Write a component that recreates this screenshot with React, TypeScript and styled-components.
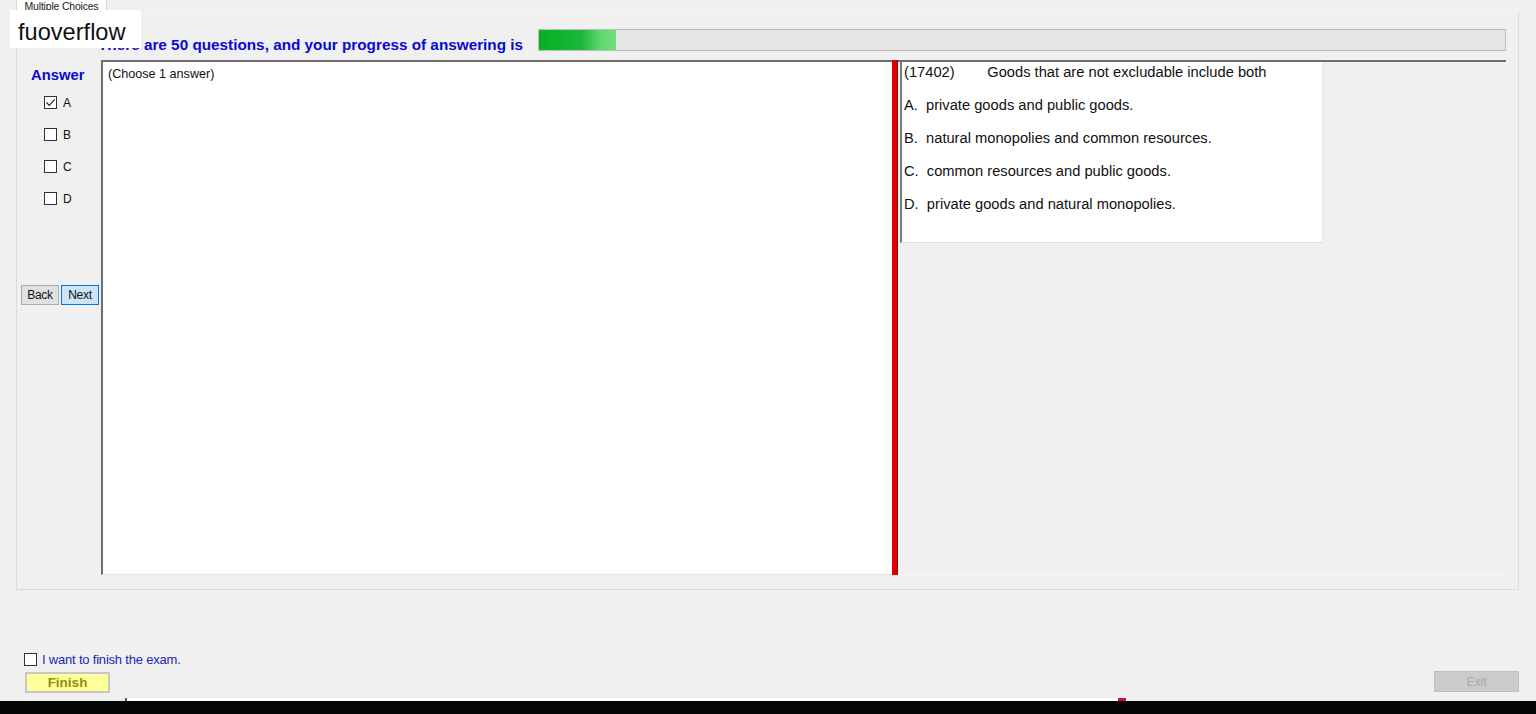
import React from 'react'
import styled, { createGlobalStyle } from 'styled-components'

const GlobalStyle = createGlobalStyle`
  html, body {
    margin: 0;
    padding: 0;
    background: #f0f0f0;
    overflow: hidden;
  }
  body {
    font-family: "Liberation Sans", Arial, sans-serif;
    color: #000;
  }
`

const Window = styled.div`
  position: relative;
  width: 1536px;
  height: 714px;
  display: flex;
  flex-direction: column;
  background: #f0f0f0;
`

const TabStrip = styled.div`
  height: 12px;
  padding-left: 16px;
  display: flex;
`

const TabHeader = styled.div`
  width: 89px;
  height: 12px;
  background: #fdfdfd;
  border-left: 1px solid #d9d9d9;
  border-right: 1px solid #d9d9d9;
  font-size: 10.5px;
  line-height: 12px;
  color: #222;
  text-align: center;
  letter-spacing: -0.2px;
`

const TabPage = styled.div`
  margin-left: 16px;
  width: 1501px;
  height: 576px;
  border: 1px solid #dadada;
  border-top-color: #f6f6f6;
  display: flex;
  flex-direction: column;
`

const HeaderRow = styled.div`
  height: 47px;
  display: flex;
  align-items: flex-start;
`

const Heading = styled.div`
  margin: 23px 0 0 81px;
  width: 440px;
  font-size: 15.3px;
  font-weight: bold;
  color: #0a0ad0;
  white-space: nowrap;
`

const ProgressTrack = styled.div`
  margin-top: 16px;
  width: 966px;
  height: 20px;
  border: 1px solid #bcbcbc;
  background: #e6e6e6;
  display: flex;
`

const ProgressFill = styled.div`
  height: 100%;
  background: linear-gradient(90deg, #06b026 0%, #1bb83a 55%, #5fd870 80%, #71dc7e 100%);
`

const Body = styled.div`
  display: flex;
  height: 515px;
`

const AnswerColumn = styled.div`
  width: 84px;
  display: flex;
  flex-direction: column;
  align-items: flex-start;
`

const AnswerTitle = styled.div`
  margin: 7px 0 0 14px;
  font-size: 14.8px;
  font-weight: bold;
  color: #0a0ad0;
`

const ChoiceList = styled.div`
  margin: 13px 0 0 27px;
  display: flex;
  flex-direction: column;
  gap: 19px;
`

const ChoiceRow = styled.label`
  display: flex;
  align-items: center;
  gap: 6px;
  font-size: 12px;
  color: #111;
  height: 13px;
`

const Box = styled.span<{ $checked?: boolean }>`
  width: 11px;
  height: 11px;
  border: 1px solid #333;
  background: #fff;
  display: flex;
  align-items: center;
  justify-content: center;
`

const NavRow = styled.div`
  margin: 80px 0 0 4px;
  display: flex;
  gap: 2px;
`

const NavButton = styled.button<{ $focused?: boolean }>`
  width: 38px;
  height: 20px;
  padding: 0;
  font-family: "Liberation Sans", Arial, sans-serif;
  font-size: 12px;
  letter-spacing: -0.3px;
  color: #111;
  background: ${p => (p.$focused ? '#cce4f7' : '#e1e1e1')};
  border: 1px solid ${p => (p.$focused ? '#0078d7' : '#adadad')};
`

const AnswerBox = styled.div`
  width: 791px;
  background: #fff;
  border-top: 2px solid #6e6e6e;
  border-left: 2px solid #6e6e6e;
  border-bottom: 1px solid #e3e3e3;
  padding: 5px 0 0 5px;
  font-size: 12.6px;
  color: #111;
  box-sizing: border-box;
`

const Splitter = styled.div`
  width: 6px;
  background: #e00000;
  border-right: 1px solid #7a1010;
  box-sizing: border-box;
`

const QuestionPane = styled.div`
  width: 608px;
  border-top: 2px solid #6e6e6e;
  border-bottom: 1px solid #fafafa;
  box-sizing: border-box;
  display: flex;
  align-items: flex-start;
`

const QuestionCard = styled.div`
  margin-left: 2px;
  width: 423px;
  height: 181px;
  box-sizing: border-box;
  background: #fff;
  border-left: 2px solid #7c7c7c;
  border-right: 1px solid #e8e8e8;
  border-bottom: 1px solid #e0e0e0;
  padding: 2px 0 0 2px;
  font-size: 14.7px;
  color: #111;
`

const QuestionLine = styled.div`
  height: 33px;
  line-height: 16px;
  white-space: pre;
`

const BottomArea = styled.div`
  flex: 1;
  display: flex;
  justify-content: space-between;
  align-items: flex-end;
  padding: 0 17px 5px 24px;
`

const FinishBlock = styled.div`
  display: flex;
  flex-direction: column;
  gap: 5px;
`

const FinishConfirm = styled.label`
  display: flex;
  align-items: center;
  gap: 5px;
  font-size: 13px;
  color: #2323b8;
  letter-spacing: -0.2px;
`

const FinishButton = styled.button`
  margin-left: 1px;
  width: 85px;
  height: 21px;
  padding: 0;
  font-family: "Liberation Sans", Arial, sans-serif;
  font-size: 13.5px;
  font-weight: bold;
  color: #8f8f10;
  background: #ffff99;
  border: 2px solid #c6c6c6;
`

const ExitButton = styled.button`
  width: 85px;
  height: 21px;
  padding: 0;
  font-family: "Liberation Sans", Arial, sans-serif;
  font-size: 12px;
  color: #a8a8a8;
  background: #cccccc;
  border: 1px solid #bfbfbf;
  margin-bottom: 1px;
`

const ScrollEdge = styled.div`
  height: 3px;
  display: flex;
  padding-left: 125px;
`

const ScrollTrack = styled.div`
  width: 991px;
  background: #fff;
  border-left: 2px solid #555;
`

const ScrollMark = styled.div`
  width: 8px;
  background: #c8103a;
`

const TaskBar = styled.div`
  height: 13px;
  background: #050505;
`

const Watermark = styled.div`
  position: absolute;
  left: 10px;
  top: 10px;
  width: 131px;
  height: 38px;
  background: #fff;
  font-size: 23.6px;
  line-height: 44px;
  padding-left: 8px;
  box-sizing: border-box;
  color: #111;
  overflow: hidden;
`

const CheckMark = () => (
  <svg width="11" height="11" viewBox="0 0 11 11">
    <path d="M1.5 5.5 L4.3 8.3 L9.6 2.3" fill="none" stroke="#222" strokeWidth="1.2" />
  </svg>
)

const choices = ['A', 'B', 'C', 'D']

const options = [
  'A.  private goods and public goods.',
  'B.  natural monopolies and common resources.',
  'C.  common resources and public goods.',
  'D.  private goods and natural monopolies.',
]

export default function App() {
  const answered = 4
  const total = 50
  return (
    <Window>
      <GlobalStyle />
      <TabStrip>
        <TabHeader>Multiple Choices</TabHeader>
      </TabStrip>
      <TabPage>
        <HeaderRow>
          <Heading>There are 50 questions, and your progress of answering is</Heading>
          <ProgressTrack>
            <ProgressFill style={{ width: `${(answered / total) * 100}%` }} />
          </ProgressTrack>
        </HeaderRow>
        <Body>
          <AnswerColumn>
            <AnswerTitle>Answer</AnswerTitle>
            <ChoiceList>
              {choices.map(c => (
                <ChoiceRow key={c}>
                  <Box $checked={c === 'A'}>{c === 'A' && <CheckMark />}</Box>
                  {c}
                </ChoiceRow>
              ))}
            </ChoiceList>
            <NavRow>
              <NavButton>Back</NavButton>
              <NavButton $focused>Next</NavButton>
            </NavRow>
          </AnswerColumn>
          <AnswerBox>(Choose 1 answer)</AnswerBox>
          <Splitter />
          <QuestionPane>
            <QuestionCard>
              <QuestionLine>{'(17402)        Goods that are not excludable include both'}</QuestionLine>
              {options.map(o => (
                <QuestionLine key={o}>{o}</QuestionLine>
              ))}
            </QuestionCard>
          </QuestionPane>
        </Body>
      </TabPage>
      <BottomArea>
        <FinishBlock>
          <FinishConfirm>
            <Box />
            I want to finish the exam.
          </FinishConfirm>
          <FinishButton>Finish</FinishButton>
        </FinishBlock>
        <ExitButton disabled>Exit</ExitButton>
      </BottomArea>
      <ScrollEdge>
        <ScrollTrack />
        <ScrollMark />
      </ScrollEdge>
      <TaskBar />
      <Watermark>fuoverflow</Watermark>
    </Window>
  )
}
